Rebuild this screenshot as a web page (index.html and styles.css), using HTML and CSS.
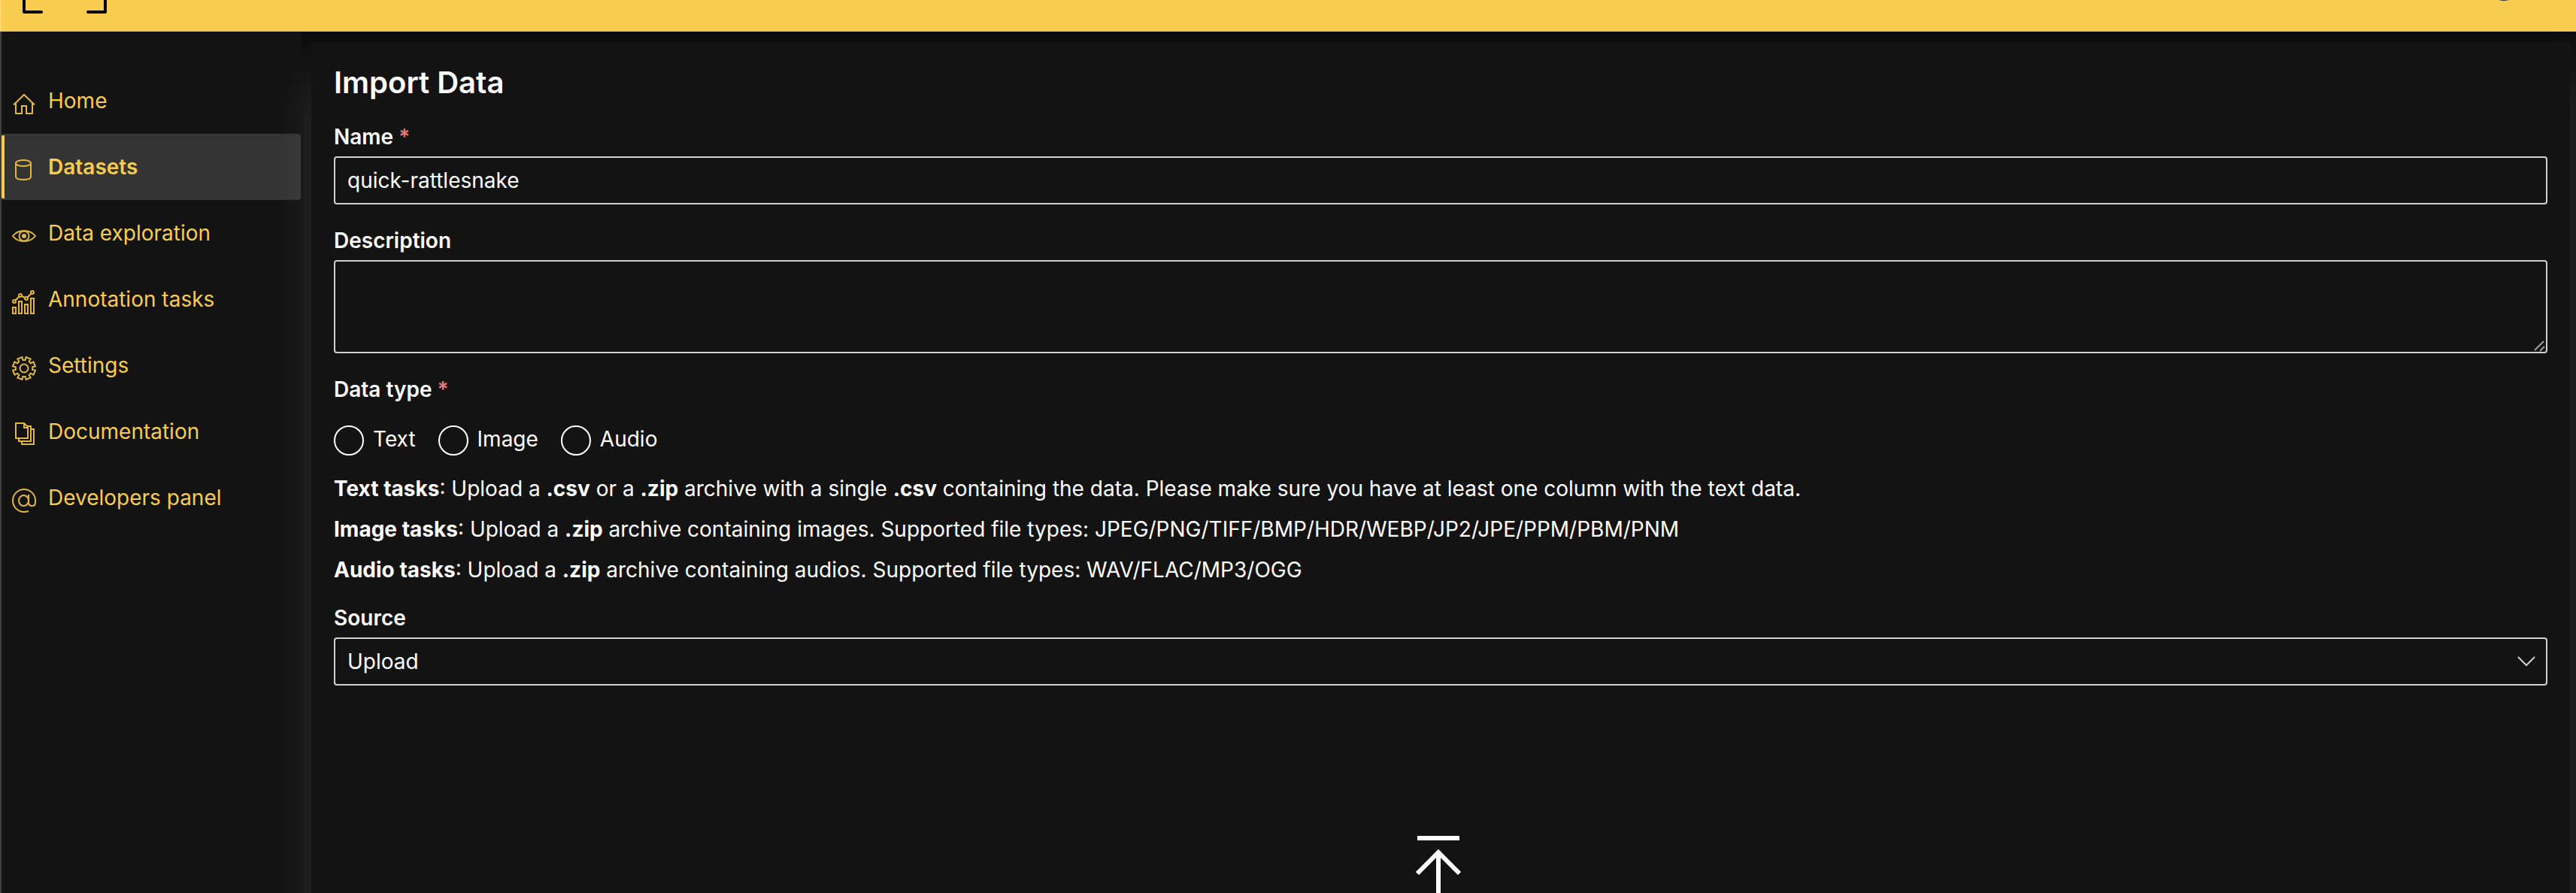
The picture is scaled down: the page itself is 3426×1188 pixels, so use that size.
FILE: index.html
```html
<!DOCTYPE html>
<html lang="en">
<head>
    <meta charset="UTF-8">
    <meta name="viewport" content="width=device-width, initial-scale=1.0">
    <title>Import Data</title>
    <link rel="stylesheet" href="styles.css">
</head>
<body>
    <header class="topbar">
        <svg class="logo" width="112" height="18" viewBox="0 0 112 18">
            <path d="M2 -4V16H25M87 16H110V-4"/>
        </svg>
        <svg class="avatar" width="40" height="2" viewBox="0 0 40 2">
            <circle cx="20" cy="-19" r="20"/>
        </svg>
    </header>

    <div class="layout">
        <nav class="sidebar">
            <a href="#" class="nav-link">
                <svg class="nav-icon" viewBox="0 0 32 32"><path d="M2 17.5L16 4L30 17.5M5 15V29H13V19H19V29H27V15"/></svg>
                <span>Home</span>
            </a>
            <a href="#" class="nav-link active">
                <svg class="nav-icon" viewBox="0 0 32 32"><ellipse cx="15" cy="7" rx="10" ry="4"/><path d="M5 7V25C5 27.5 9 29 15 29S25 27.5 25 25V7"/></svg>
                <span>Datasets</span>
            </a>
            <a href="#" class="nav-link">
                <svg class="nav-icon" viewBox="0 0 32 32"><path d="M1 16C5 11 10 9 16 9S27 11 31 16C27 21 22 23 16 23S5 21 1 16Z"/><circle cx="16" cy="16" r="6.5"/><circle class="dot" cx="16" cy="16" r="3"/></svg>
                <span>Data exploration</span>
            </a>
            <a href="#" class="nav-link">
                <svg class="nav-icon" viewBox="0 0 32 32"><path d="M1 23H5V31H1ZM9 15H13V31H9ZM17 19H21V31H17ZM25 11H29V31H25ZM4.5 13.5L9.5 8.5M13 8L17 10M20.5 9.5L25.5 4.5"/><circle cx="3" cy="15" r="2"/><circle cx="11" cy="7" r="2"/><circle cx="19" cy="11" r="2"/><circle cx="27" cy="3" r="2"/></svg>
                <span>Annotation tasks</span>
            </a>
            <a href="#" class="nav-link">
                <svg class="nav-icon" viewBox="0 0 32 32"><path d="M14.4 4.9H17.6L18.6 1L24.7 3.5L22.7 7.1L24.9 9.3L28.5 7.3L31 13.4L27.1 14.4V17.6L31 18.6L28.5 24.7L24.9 22.7L22.7 24.9L24.7 28.5L18.6 31L17.6 27.1H14.4L13.4 31L7.3 28.5L9.3 24.9L7.1 22.7L3.5 24.7L1 18.6L4.9 17.6V14.4L1 13.4L3.5 7.3L7.1 9.3L9.3 7.1L7.3 3.5L13.4 1Z"/><circle cx="16" cy="16" r="5.5"/></svg>
                <span>Settings</span>
            </a>
            <a href="#" class="nav-link">
                <svg class="nav-icon" viewBox="0 0 32 32"><path d="M5 1H16L21 6V21H5ZM16 1V7H21M9 21V25H25V5H20M13 25V29H29V9H25"/></svg>
                <span>Documentation</span>
            </a>
            <a href="#" class="nav-link">
                <svg class="nav-icon" viewBox="0 0 32 32"><path d="M22 30C20 30.7 18 31 16 31A15 15 0 1 1 31 16V18.5C31 21.5 29.5 23 26.7 23S22 21.5 22 18.5V8"/><ellipse cx="15.5" cy="16" rx="6.5" ry="7"/></svg>
                <span>Developers panel</span>
            </a>
        </nav>

        <main class="panel">
            <h1>Import Data</h1>
            <form>
                <div class="field">
                    <label for="name">Name <span class="required">*</span></label>
                    <input type="text" id="name" class="control" value="quick-rattlesnake" required>
                </div>

                <div class="field">
                    <label for="description">Description</label>
                    <div class="control-wrap">
                        <textarea id="description" class="control"></textarea>
                        <svg class="grip" width="16" height="16" viewBox="0 0 16 16"><path d="M1 14L13 2M8 15L14 9"/></svg>
                    </div>
                </div>

                <fieldset class="field">
                    <legend>Data type <span class="required">*</span></legend>
                    <div class="radio-group">
                        <label class="radio"><input type="radio" name="datatype" value="text">Text</label>
                        <label class="radio"><input type="radio" name="datatype" value="image">Image</label>
                        <label class="radio"><input type="radio" name="datatype" value="audio">Audio</label>
                    </div>
                </fieldset>

                <div class="hints">
                    <p><b>Text tasks</b>: Upload a <b>.csv</b> or a <b>.zip</b> archive with a single <b>.csv</b> containing the data. Please make sure you have at least one column with the text data.</p>
                    <p><b>Image tasks</b>: Upload a <b>.zip</b> archive containing images. Supported file types: JPEG/PNG/TIFF/BMP/HDR/WEBP/JP2/JPE/PPM/PBM/PNM</p>
                    <p><b>Audio tasks</b>: Upload a <b>.zip</b> archive containing audios. Supported file types: WAV/FLAC/MP3/OGG</p>
                </div>

                <div class="source">
                    <label for="source">Source</label>
                    <div class="control-wrap">
                        <select id="source" class="control">
                            <option>Upload</option>
                        </select>
                        <svg class="chevron" width="24" height="16" viewBox="0 0 24 16"><path d="M1 2L12 13L23 2"/></svg>
                    </div>
                </div>

                <div class="dropzone">
                    <svg width="68" height="108" viewBox="0 0 68 108">
                        <path d="M3 3H59M31 20V108M3 50L31 22L59 50"/>
                    </svg>
                </div>
            </form>
        </main>
    </div>
</body>
</html>
```
FILE: styles.css
```css
* {
    box-sizing: border-box;
}

body {
    margin: 0;
    height: 100vh;
    overflow: hidden;
    display: flex;
    flex-direction: column;
    font-family: Inter, sans-serif;
    font-size: 28px;
    background-color: #131313;
    color: #ffffff;
}

svg {
    display: block;
    fill: none;
    stroke-width: 2;
}

/* Top bar */
.topbar {
    display: flex;
    justify-content: space-between;
    align-items: flex-start;
    flex: none;
    height: 42px;
    padding: 0 76px 0 28px;
    background-color: #f8cc4f;
    border-left: 2px solid rgba(255, 255, 255, 0.2);
    box-shadow: 0 8px 40px rgba(0, 0, 0, 0.7);
}

.logo {
    stroke: #000000;
    stroke-width: 4;
    stroke-linecap: round;
    stroke-linejoin: round;
}

.avatar {
    fill: #2c2c3c;
}

.layout {
    display: flex;
    flex: 1;
    min-height: 0;
}

/* Sidebar */
.sidebar {
    flex: none;
    width: 400px;
    padding-top: 48px;
    background-color: #131313;
    border-left: 2px solid #3e3e3e;
    position: relative;
}

.nav-link {
    display: flex;
    align-items: center;
    gap: 16px;
    height: 88px;
    padding-left: 14px;
    color: #f8cc4f;
    text-decoration: none;
    position: relative;
}

.nav-link.active {
    background-color: #343434;
    border-radius: 0 4px 4px 0;
    font-weight: 600;
}

.nav-link.active::before {
    content: "";
    position: absolute;
    left: 0;
    top: 2px;
    bottom: 2px;
    width: 4px;
    border-radius: 2px 0 0 2px;
    background-color: #f8cc4f;
}

.nav-icon {
    width: 32px;
    height: 32px;
    margin-top: 8px;
    stroke: #e0b646;
    overflow: visible;
}

.nav-icon .dot {
    fill: #e0b646;
    stroke: none;
}

/* Content panel */
.panel {
    flex: 1;
    align-self: flex-start;
    min-height: 1400px;
    margin: 14px 8px 0 14px;
    padding: 30px;
    background-color: #131313;
    box-shadow: 0 52px 52px rgba(255, 255, 255, 0.1);
    position: relative;
}

h1 {
    margin: 0 0 22px;
    font-size: 40px;
    font-weight: 600;
    line-height: 48px;
}

.field {
    margin: 0 0 22px;
    padding: 0;
    border: none;
}

.field > label,
.source > label,
legend {
    display: block;
    padding: 0;
    font-weight: 600;
    line-height: 52px;
}

.required {
    color: #e27a80;
}

.control {
    display: block;
    width: 100%;
    height: 64px;
    padding: 0 16px;
    font: inherit;
    color: #ffffff;
    background-color: #131313;
    border: 2px solid #d0d0d0;
    border-radius: 4px;
    appearance: none;
}

textarea.control {
    height: 124px;
    padding: 12px 16px;
    resize: none;
}

.control:focus {
    outline: none;
    border-color: #f8cc4f;
}

.control-wrap {
    position: relative;
}

.grip {
    position: absolute;
    right: 2px;
    bottom: 2px;
    stroke: #a0a0a0;
}

.chevron {
    position: absolute;
    right: 16px;
    top: 24px;
    stroke: #d0d0d0;
    pointer-events: none;
}

.radio-group {
    display: flex;
    gap: 30px;
    padding-top: 22px;
}

.radio {
    display: flex;
    align-items: flex-start;
    gap: 12px;
    line-height: 36px;
}

.radio input {
    appearance: none;
    width: 40px;
    height: 40px;
    margin: 0;
    border: 2px solid #ffffff;
    border-radius: 50%;
}

.radio input:checked {
    border-width: 10px;
}

.hints {
    display: flex;
    flex-direction: column;
    gap: 10px;
    margin-bottom: 16px;
}

.hints p {
    margin: 0;
    line-height: 44px;
}

/* Upload area */
.dropzone {
    display: flex;
    justify-content: center;
    padding-top: 200px;
}

.dropzone svg {
    stroke: #ffffff;
    stroke-width: 6;
}
```
